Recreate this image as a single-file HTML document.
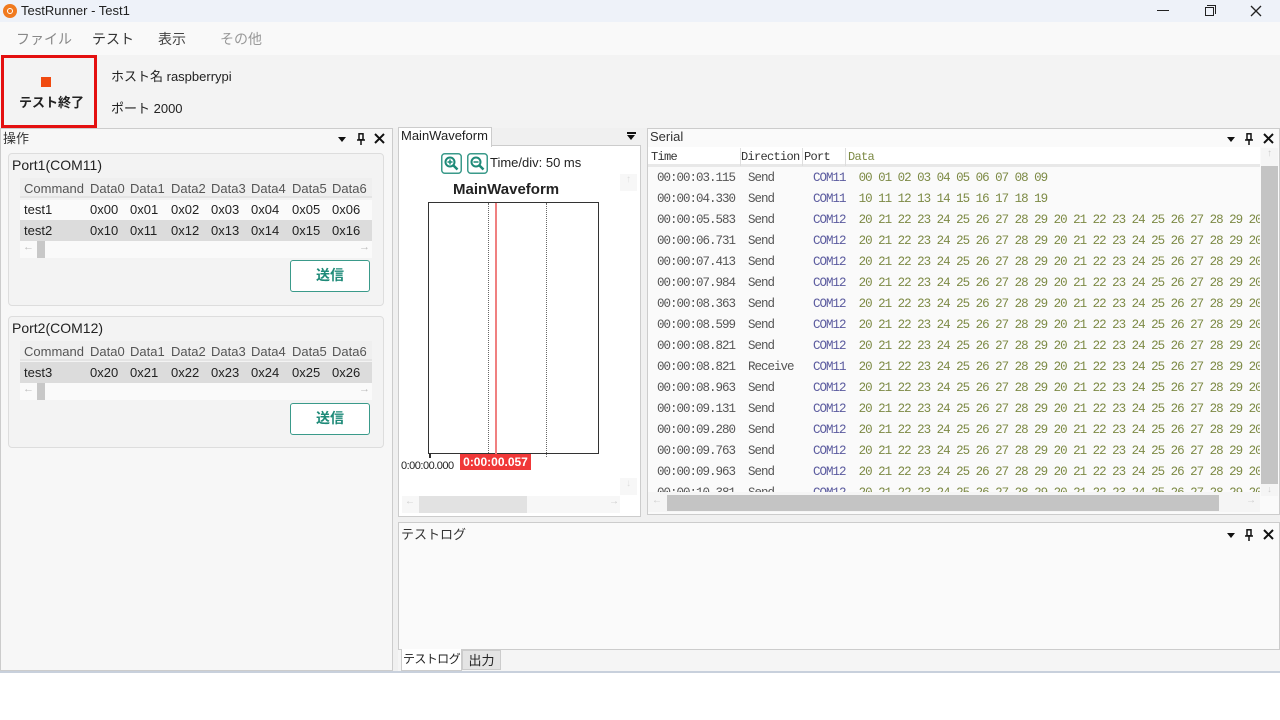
<!DOCTYPE html>
<html><head><meta charset="utf-8"><style>
*{box-sizing:border-box;margin:0;padding:0}
body{width:1280px;height:720px;background:#fff;font-family:"Liberation Sans","Noto Sans CJK JP",sans-serif;font-size:13px;color:#222;position:relative;overflow:hidden}
.a{position:absolute;white-space:nowrap}
.mono{font-family:"Liberation Mono","Noto Sans CJK JP",monospace;font-size:12px;letter-spacing:-0.7px;color:#555;white-space:pre}
.row{position:absolute;left:0;height:21px;line-height:21px}
.port{color:#5a5a9e}
.dat{color:#7d8a45}
.tri{position:absolute;width:0;height:0;border-left:4px solid transparent;border-right:4px solid transparent;border-top:5px solid #111}
</style></head><body>
<div class="a" style="left:0;top:0;width:1280px;height:22px;background:#eef2f9"></div>
<div class="a" style="left:3px;top:4px;width:14px;height:14px;border-radius:50%;background:#f07a20"></div>
<div class="a" style="left:7px;top:8px;width:6px;height:6px;border-radius:50%;border:1.5px solid #fff"></div>
<div class="a" style="left:21px;top:3px;font-size:13px">TestRunner - Test1</div>
<div class="a" style="left:1157px;top:10px;width:12px;height:1px;background:#222"></div>
<div class="a" style="left:1205px;top:7px;width:9px;height:9px;border:1.2px solid #222"></div>
<div class="a" style="left:1207px;top:5px;width:9px;height:9px;border-top:1.2px solid #222;border-right:1.2px solid #222"></div>
<svg class="a" style="left:1250px;top:5px" width="12" height="12"><path d="M1 1L11 11M11 1L1 11" stroke="#222" stroke-width="1.3"/></svg>
<div class="a" style="left:0;top:22px;width:1280px;height:33px;background:#f9f9f9"></div>
<div class="a" style="left:16px;top:29px;font-size:14px;color:#888">ファイル</div>
<div class="a" style="left:92px;top:29px;font-size:14px;color:#333">テスト</div>
<div class="a" style="left:158px;top:29px;font-size:14px;color:#444">表示</div>
<div class="a" style="left:220px;top:29px;font-size:14px;color:#999">その他</div>
<div class="a" style="left:0;top:55px;width:1280px;height:73px;background:#f3f3f3"></div>
<div class="a" style="left:1px;top:55px;width:96px;height:73px;border:3px solid #e41010"></div>
<div class="a" style="left:41px;top:77px;width:10px;height:10px;background:#f04a10"></div>
<div class="a" style="left:19px;top:92px;font-size:13px;font-weight:bold">テスト終了</div>
<div class="a" style="left:111px;top:66px;font-size:13px">ホスト名 raspberrypi</div>
<div class="a" style="left:111px;top:98px;font-size:13px">ポート 2000</div>
<div class="a" style="left:0;top:128px;width:1280px;height:544px;background:#f0f0f0"></div>
<div class="a" style="left:0;top:671px;width:1280px;height:2px;background:#c8d0dc"></div>
<div class="a" style="left:0;top:128px;width:393px;height:543px;background:#f7f7f7;border:1px solid #ccc"></div>
<div class="a" style="left:3px;top:128px;font-size:13px;color:#333">操作</div>
<div class="tri" style="left:338px;top:137px"></div>
<svg class="a" style="left:357px;top:133px" width="8" height="12"><rect x="2" y="0.8" width="4" height="6" fill="none" stroke="#111" stroke-width="1.5"/><path d="M0 7H8M4 7V12" stroke="#111" stroke-width="1.5"/></svg>
<svg class="a" style="left:374px;top:133px" width="11" height="11"><path d="M1 1L10 10M10 1L1 10" stroke="#111" stroke-width="2"/></svg>
<div class="a" style="left:8px;top:153px;width:376px;height:153px;background:#f3f3f3;border:1px solid #ddd;border-radius:4px"></div>
<div class="a" style="left:12px;top:157px;font-size:14px">Port1(COM11)</div>
<div class="a" style="left:20px;top:178px;width:352px;height:20px;background:#efefef;border-bottom:2px solid #e4e4e4"></div>
<div class="a" style="left:20px;top:200px;width:352px;height:20px;background:#fafafa"></div>
<div class="a" style="left:20px;top:220px;width:352px;height:21px;background:#dcdcdc"></div>
<div class="a" style="left:20px;top:241px;width:352px;height:17px;background:#fafafa"></div>
<div class="a" style="left:37px;top:241px;width:8px;height:17px;background:#c8c8c8"></div>
<div class="a" style="left:23px;top:241px;font-size:11px;color:#bbb">&#8592;</div>
<div class="a" style="left:359px;top:241px;font-size:11px;color:#bbb">&#8594;</div>
<div class="a" style="left:24px;top:181px;color:#555">Command</div>
<div class="a" style="left:90px;top:181px;color:#555">Data0</div><div class="a" style="left:130px;top:181px;color:#555">Data1</div><div class="a" style="left:171px;top:181px;color:#555">Data2</div><div class="a" style="left:211px;top:181px;color:#555">Data3</div><div class="a" style="left:251px;top:181px;color:#555">Data4</div><div class="a" style="left:292px;top:181px;color:#555">Data5</div><div class="a" style="left:332px;top:181px;color:#555">Data6</div>
<div class="a" style="left:24px;top:202px">test1</div>
<div class="a" style="left:90px;top:202px">0x00</div><div class="a" style="left:130px;top:202px">0x01</div><div class="a" style="left:171px;top:202px">0x02</div><div class="a" style="left:211px;top:202px">0x03</div><div class="a" style="left:251px;top:202px">0x04</div><div class="a" style="left:292px;top:202px">0x05</div><div class="a" style="left:332px;top:202px">0x06</div>
<div class="a" style="left:24px;top:223px">test2</div>
<div class="a" style="left:90px;top:223px">0x10</div><div class="a" style="left:130px;top:223px">0x11</div><div class="a" style="left:171px;top:223px">0x12</div><div class="a" style="left:211px;top:223px">0x13</div><div class="a" style="left:251px;top:223px">0x14</div><div class="a" style="left:292px;top:223px">0x15</div><div class="a" style="left:332px;top:223px">0x16</div>
<div class="a" style="left:290px;top:260px;width:80px;height:32px;background:#fff;border:1.5px solid #3a9a8a;border-radius:3px;color:#1e8a78;font-weight:bold;font-size:14px;text-align:center;line-height:29px">送信</div>
<div class="a" style="left:8px;top:316px;width:376px;height:132px;background:#f3f3f3;border:1px solid #ddd;border-radius:4px"></div>
<div class="a" style="left:12px;top:320px;font-size:14px">Port2(COM12)</div>
<div class="a" style="left:20px;top:341px;width:352px;height:20px;background:#efefef;border-bottom:2px solid #e4e4e4"></div>
<div class="a" style="left:20px;top:362px;width:352px;height:21px;background:#dcdcdc"></div>
<div class="a" style="left:20px;top:383px;width:352px;height:17px;background:#fafafa"></div>
<div class="a" style="left:37px;top:383px;width:8px;height:17px;background:#c8c8c8"></div>
<div class="a" style="left:23px;top:383px;font-size:11px;color:#bbb">&#8592;</div>
<div class="a" style="left:359px;top:383px;font-size:11px;color:#bbb">&#8594;</div>
<div class="a" style="left:24px;top:344px;color:#555">Command</div>
<div class="a" style="left:90px;top:344px;color:#555">Data0</div><div class="a" style="left:130px;top:344px;color:#555">Data1</div><div class="a" style="left:171px;top:344px;color:#555">Data2</div><div class="a" style="left:211px;top:344px;color:#555">Data3</div><div class="a" style="left:251px;top:344px;color:#555">Data4</div><div class="a" style="left:292px;top:344px;color:#555">Data5</div><div class="a" style="left:332px;top:344px;color:#555">Data6</div>
<div class="a" style="left:24px;top:365px">test3</div>
<div class="a" style="left:90px;top:365px">0x20</div><div class="a" style="left:130px;top:365px">0x21</div><div class="a" style="left:171px;top:365px">0x22</div><div class="a" style="left:211px;top:365px">0x23</div><div class="a" style="left:251px;top:365px">0x24</div><div class="a" style="left:292px;top:365px">0x25</div><div class="a" style="left:332px;top:365px">0x26</div>
<div class="a" style="left:290px;top:403px;width:80px;height:32px;background:#fff;border:1.5px solid #3a9a8a;border-radius:3px;color:#1e8a78;font-weight:bold;font-size:14px;text-align:center;line-height:29px">送信</div>

<div class="a" style="left:398px;top:145px;width:243px;height:372px;background:#fff;border:1px solid #ccc"></div>
<div class="a" style="left:398px;top:127px;width:94px;height:20px;background:#fff;border:1px solid #ccc;border-bottom:none"></div>
<div class="a" style="left:401px;top:128px;font-size:13px">MainWaveform</div>
<div class="a" style="left:627px;top:132px;width:9px;height:2px;background:#111"></div>
<div class="tri" style="left:627px;top:135px;border-left-width:4.5px;border-right-width:4.5px"></div>
<svg class="a" style="left:441px;top:153px" width="21" height="21"><rect x="0.75" y="0.75" width="19.5" height="19.5" rx="3" fill="#fff" stroke="#3a9a8a" stroke-width="1.5"/><circle cx="9" cy="9" r="4.5" fill="none" stroke="#1e8a78" stroke-width="2"/><path d="M12.2 12.2L16.5 16.5" stroke="#1e8a78" stroke-width="2.5"/><path d="M6.5 9H11.5M9 6.5V11.5" stroke="#1e8a78" stroke-width="1.5"/></svg>
<svg class="a" style="left:467px;top:153px" width="21" height="21"><rect x="0.75" y="0.75" width="19.5" height="19.5" rx="3" fill="#fff" stroke="#3a9a8a" stroke-width="1.5"/><circle cx="9" cy="9" r="4.5" fill="none" stroke="#1e8a78" stroke-width="2"/><path d="M12.2 12.2L16.5 16.5" stroke="#1e8a78" stroke-width="2.5"/><path d="M6.5 9H11.5" stroke="#1e8a78" stroke-width="1.5"/></svg>
<div class="a" style="left:490px;top:155px;font-size:13px">Time/div: 50 ms</div>
<div class="a" style="left:620px;top:174px;width:17px;height:17px;background:#f7f7f7;color:#ddd;font-size:10px;text-align:center">&#8593;</div>
<div class="a" style="left:453px;top:181px;font-size:15px;font-weight:bold">MainWaveform</div>
<div class="a" style="left:428px;top:202px;width:171px;height:252px;border:1.5px solid #333"></div>
<div class="a" style="left:488px;top:203px;height:254px;border-left:1.5px dotted #666"></div>
<div class="a" style="left:546px;top:203px;height:254px;border-left:1.5px dotted #666"></div>
<div class="a" style="left:495px;top:203px;width:1.5px;height:252px;background:#f08080"></div>
<div class="a" style="left:429px;top:453px;width:1.5px;height:5px;background:#333"></div>
<div class="a" style="left:401px;top:460px;font-size:11px;letter-spacing:-0.5px">0:00:00.000</div>
<div class="a" style="left:460px;top:454px;width:71px;height:16px;background:#f03838;color:#fff;font-size:12px;font-weight:bold;text-align:center;line-height:16px">0:00:00.057</div>
<div class="a" style="left:620px;top:478px;width:17px;height:17px;background:#f7f7f7;color:#ddd;font-size:10px;text-align:center">&#8595;</div>
<div class="a" style="left:402px;top:496px;width:218px;height:17px;background:#f7f7f7"></div>
<div class="a" style="left:419px;top:496px;width:108px;height:17px;background:#e2e2e2"></div>
<div class="a" style="left:405px;top:496px;font-size:10px;color:#ccc">&#8592;</div>
<div class="a" style="left:609px;top:496px;font-size:10px;color:#ccc">&#8594;</div>

<div class="a" style="left:647px;top:128px;width:633px;height:387px;background:#fafafa;border:1px solid #ccc"></div>
<div class="a" style="left:650px;top:129px;font-size:13px;color:#333">Serial</div>
<div class="tri" style="left:1227px;top:137px"></div>
<svg class="a" style="left:1245px;top:133px" width="8" height="12"><rect x="2" y="0.8" width="4" height="6" fill="none" stroke="#111" stroke-width="1.5"/><path d="M0 7H8M4 7V12" stroke="#111" stroke-width="1.5"/></svg>
<svg class="a" style="left:1263px;top:133px" width="11" height="11"><path d="M1 1L10 10M10 1L1 10" stroke="#111" stroke-width="2"/></svg>
<div class="a" style="left:648px;top:147px;width:612px;height:20px;background:#fff;border-bottom:3px solid #e8e8e8"></div>
<div class="a" style="left:740px;top:148px;height:18px;border-left:1px solid #ddd"></div>
<div class="a" style="left:802px;top:148px;height:18px;border-left:1px solid #ddd"></div>
<div class="a" style="left:845px;top:148px;height:18px;border-left:1px solid #ddd"></div>
<div class="a mono" style="left:651px;top:150px;color:#333">Time</div>
<div class="a mono" style="left:741px;top:150px;color:#333">Direction</div>
<div class="a mono" style="left:804px;top:150px;color:#333">Port</div>
<div class="a mono dat" style="left:848px;top:150px">Data</div>
<div class="a" style="left:1261px;top:148px;width:17px;height:18px;background:#f5f5f5;color:#ccc;font-size:10px;text-align:center">&#8593;</div>
<div class="a" style="left:1261px;top:166px;width:17px;height:318px;background:#c4c4c4"></div>
<div class="a" style="left:1261px;top:484px;width:17px;height:12px;background:#f5f5f5;color:#ccc;font-size:9px;text-align:center">&#8595;</div>
<div class="a" style="left:648px;top:168px;width:612px;height:324px;overflow:hidden">
<div class="a mono" style="left:9px;top:0;font-size:12.5px;letter-spacing:-1px">
<div class="row" style="top:0">00:00:03.115  Send      <span class="port">COM11</span>  <span class="dat">00 01 02 03 04 05 06 07 08 09</span></div>
<div class="row" style="top:21px">00:00:04.330  Send      <span class="port">COM11</span>  <span class="dat">10 11 12 13 14 15 16 17 18 19</span></div>
<div class="row" style="top:42px">00:00:05.583  Send      <span class="port">COM12</span>  <span class="dat">20 21 22 23 24 25 26 27 28 29 20 21 22 23 24 25 26 27 28 29 20</span></div>
<div class="row" style="top:63px">00:00:06.731  Send      <span class="port">COM12</span>  <span class="dat">20 21 22 23 24 25 26 27 28 29 20 21 22 23 24 25 26 27 28 29 20</span></div>
<div class="row" style="top:84px">00:00:07.413  Send      <span class="port">COM12</span>  <span class="dat">20 21 22 23 24 25 26 27 28 29 20 21 22 23 24 25 26 27 28 29 20</span></div>
<div class="row" style="top:105px">00:00:07.984  Send      <span class="port">COM12</span>  <span class="dat">20 21 22 23 24 25 26 27 28 29 20 21 22 23 24 25 26 27 28 29 20</span></div>
<div class="row" style="top:126px">00:00:08.363  Send      <span class="port">COM12</span>  <span class="dat">20 21 22 23 24 25 26 27 28 29 20 21 22 23 24 25 26 27 28 29 20</span></div>
<div class="row" style="top:147px">00:00:08.599  Send      <span class="port">COM12</span>  <span class="dat">20 21 22 23 24 25 26 27 28 29 20 21 22 23 24 25 26 27 28 29 20</span></div>
<div class="row" style="top:168px">00:00:08.821  Send      <span class="port">COM12</span>  <span class="dat">20 21 22 23 24 25 26 27 28 29 20 21 22 23 24 25 26 27 28 29 20</span></div>
<div class="row" style="top:189px">00:00:08.821  Receive   <span class="port">COM11</span>  <span class="dat">20 21 22 23 24 25 26 27 28 29 20 21 22 23 24 25 26 27 28 29 20</span></div>
<div class="row" style="top:210px">00:00:08.963  Send      <span class="port">COM12</span>  <span class="dat">20 21 22 23 24 25 26 27 28 29 20 21 22 23 24 25 26 27 28 29 20</span></div>
<div class="row" style="top:231px">00:00:09.131  Send      <span class="port">COM12</span>  <span class="dat">20 21 22 23 24 25 26 27 28 29 20 21 22 23 24 25 26 27 28 29 20</span></div>
<div class="row" style="top:252px">00:00:09.280  Send      <span class="port">COM12</span>  <span class="dat">20 21 22 23 24 25 26 27 28 29 20 21 22 23 24 25 26 27 28 29 20</span></div>
<div class="row" style="top:273px">00:00:09.763  Send      <span class="port">COM12</span>  <span class="dat">20 21 22 23 24 25 26 27 28 29 20 21 22 23 24 25 26 27 28 29 20</span></div>
<div class="row" style="top:294px">00:00:09.963  Send      <span class="port">COM12</span>  <span class="dat">20 21 22 23 24 25 26 27 28 29 20 21 22 23 24 25 26 27 28 29 20</span></div>
<div class="row" style="top:315px">00:00:10.381  Send      <span class="port">COM12</span>  <span class="dat">20 21 22 23 24 25 26 27 28 29 20 21 22 23 24 25 26 27 28 29 20</span></div>
</div></div>
<div class="a" style="left:648px;top:492px;width:612px;height:20px;background:#f5f5f5"></div>
<div class="a" style="left:667px;top:495px;width:552px;height:16px;background:#c4c4c4"></div>
<div class="a" style="left:652px;top:495px;font-size:10px;color:#ccc">&#8592;</div>
<div class="a" style="left:1246px;top:495px;font-size:10px;color:#ccc">&#8594;</div>

<div class="a" style="left:398px;top:522px;width:882px;height:128px;background:#fafafa;border:1px solid #ccc"></div>
<div class="a" style="left:401px;top:524px;font-size:13px;color:#333">テストログ</div>
<div class="tri" style="left:1227px;top:533px"></div>
<svg class="a" style="left:1245px;top:529px" width="8" height="12"><rect x="2" y="0.8" width="4" height="6" fill="none" stroke="#111" stroke-width="1.5"/><path d="M0 7H8M4 7V12" stroke="#111" stroke-width="1.5"/></svg>
<svg class="a" style="left:1263px;top:529px" width="11" height="11"><path d="M1 1L10 10M10 1L1 10" stroke="#111" stroke-width="2"/></svg>
<div class="a" style="left:398px;top:650px;width:882px;height:21px;background:#f5f5f5"></div>
<div class="a" style="left:401px;top:649px;width:61px;height:22px;background:#fff;border:1px solid #ccc;border-top:none;font-size:12px;letter-spacing:-0.6px;text-align:center;line-height:21px;overflow:hidden">テストログ</div>
<div class="a" style="left:462px;top:650px;width:39px;height:20px;background:#e4e4e4;border:1px solid #ccc;font-size:13px;text-align:center;line-height:19px">出力</div>
</body></html>
